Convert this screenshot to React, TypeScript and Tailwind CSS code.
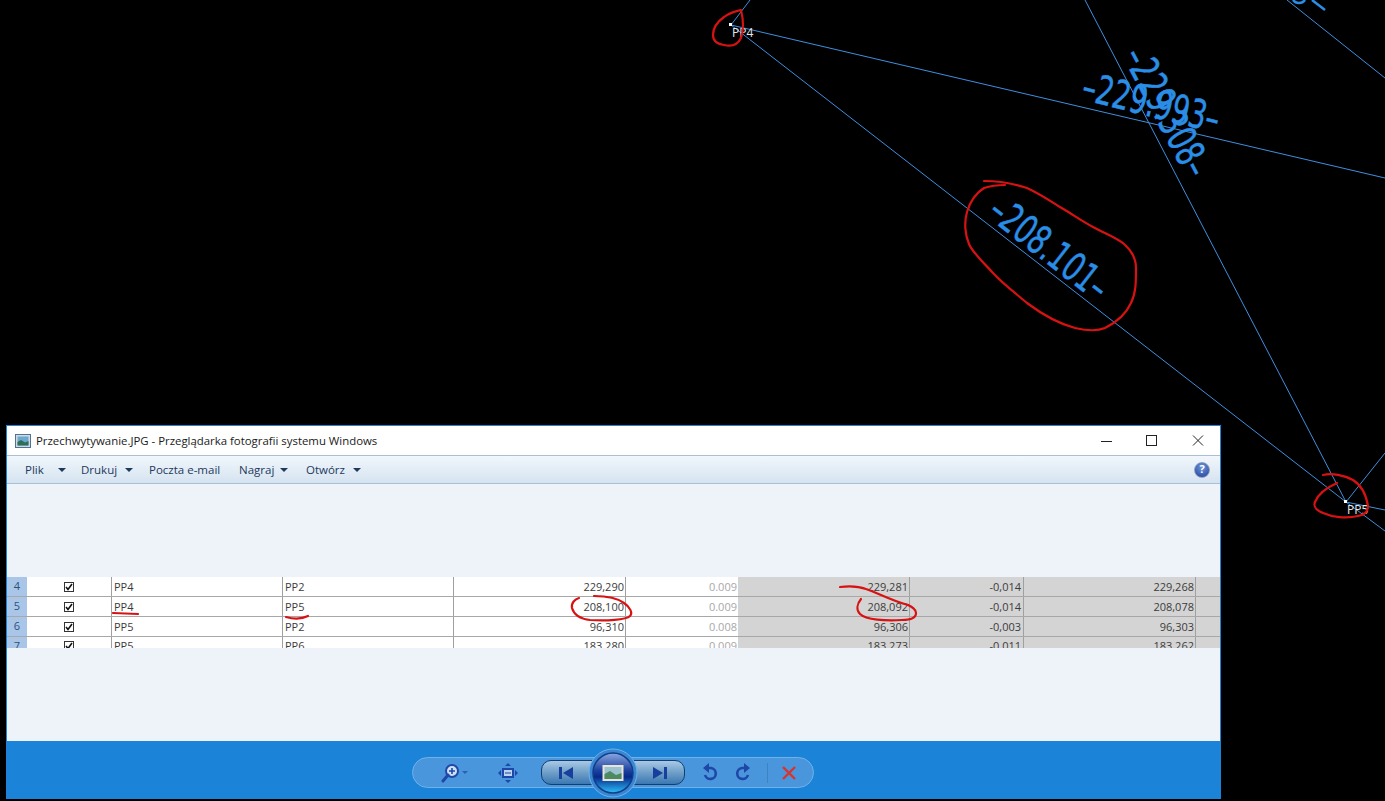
const font = "font-['Open_Sans','Noto_Sans',sans-serif]";

const rows = [
  { n: '4', a: 'PP4', b: 'PP2', c: '229,290', d: '0.009', e: '229,281', f: '-0,014', g: '229,268' },
  { n: '5', a: 'PP4', b: 'PP5', c: '208,100', d: '0.009', e: '208,092', f: '-0,014', g: '208,078' },
  { n: '6', a: 'PP5', b: 'PP2', c: '96,310', d: '0.008', e: '96,306', f: '-0,003', g: '96,303' },
  { n: '7', a: 'PP5', b: 'PP6', c: '183,280', d: '0.009', e: '183,273', f: '-0,011', g: '183,262' },
];

const menu = [
  { label: 'Plik', w: 'w-[56px]', arrow: 'mr-[15px]' },
  { label: 'Drukuj', w: 'w-[68px]', arrow: 'mr-[16px]' },
  { label: 'Poczta e-mail', w: 'w-[90px]', arrow: '' },
  { label: 'Nagraj', w: 'w-[67px]', arrow: 'mr-[18px]' },
  { label: 'Otwórz', w: 'w-[70px]', arrow: 'mr-[15px]' },
];

function CadDrawing() {
  const label = 'font-["DejaVu_Sans",sans-serif]';
  return (
    <svg className="absolute inset-0" width="1385" height="801">
      <g stroke="#3f8fe0" strokeWidth="1" fill="none">
        <line x1="731" y1="25" x2="1385" y2="178" />
        <line x1="731" y1="25" x2="1346" y2="502" />
        <line x1="731" y1="25" x2="750" y2="0" />
        <line x1="1085" y1="0" x2="1346" y2="502" />
        <line x1="1287" y1="0" x2="1385" y2="78" />
        <line x1="1346" y1="502" x2="1385" y2="453" />
        <line x1="1346" y1="502" x2="1385" y2="510" />
        <line x1="1346" y1="502" x2="1385" y2="531" />
      </g>
      <g fill="#2a8ee6" stroke="#2a8ee6" strokeWidth="0.5" className={label}>
        <text transform="translate(1041 259) rotate(38) scale(0.72 1.05)" fontSize="38" textAnchor="middle">–208.101–</text>
        <text transform="translate(1148 116) rotate(14) scale(0.72 1.05)" fontSize="38" textAnchor="middle">–229.993–</text>
        <text transform="translate(1155 118) rotate(62) scale(0.72 1.05)" fontSize="38" textAnchor="middle">–229.308–</text>
      </g>
      <g stroke="#2a8ee6" strokeWidth="2.5" fill="none">
        <path d="M1312 0 L1325 10" />
        <path d="M1293 0 C1296 4 1302 4 1305 0" />
      </g>
      <rect x="729" y="23" width="3" height="3" fill="#fff" />
      <rect x="1344" y="500" width="3" height="3" fill="#fff" />
      <g fill="#e8e8e8" fontSize="12" className={font}>
        <text x="732" y="37">PP4</text>
        <text x="1347" y="514">PP5</text>
      </g>
    </svg>
  );
}

function Annotations() {
  return (
    <svg className="absolute inset-0 pointer-events-none" width="1385" height="801">
      <g stroke="#d81212" fill="none" strokeWidth="2.2" strokeLinecap="round" strokeLinejoin="round">
        <path d="M741 10 C733 12 729 13 724 17 C717 22 713 28 713 35 C713 41 717 44 724 45 C732 47 738 44 741 38 C743 32 744 22 741 10" />
        <path d="M1323 475 C1332 473 1344 475 1353 480 C1361 485 1366 494 1368 506 C1368 512 1364 515 1358 516 C1346 519 1332 517 1323 513 C1316 510 1313 507 1315 502 C1318 494 1328 487 1337 483" />
        <path d="M984 181 C995 181 1012 183 1027 188 C1040 194 1052 202 1060 207 C1072 214 1082 221 1093 227 C1106 234 1117 238 1124 244 C1132 251 1136 258 1136 268 C1136 282 1136 293 1131 303 C1126 314 1117 322 1105 328 C1098 331 1088 331 1075 328 C1060 324 1043 315 1027 303 C1014 292 1002 283 993 273 C984 263 972 252 969 244 C965 235 964 222 967 212 C970 202 976 193 984 188 C990 186 998 185 1005 185" />
        <path d="M113 613 L138 614" />
        <path d="M286 617 C293 619 302 619 308 616" />
        <path d="M594 596 C604 596 616 597 624 603 C630 607 633 613 630 616 C626 620 606 621 590 620 C581 619 574 615 572 608 C571 603 575 599 579 598" />
        <path d="M840 587 C848 586 858 586 866 589 C878 593 892 601 908 605" />
        <path d="M861 599 C857 604 856 610 860 614 C866 620 886 621 902 620 C910 620 916 618 916 613 C916 609 912 607 908 605" />
      </g>
    </svg>
  );
}

function PictureIcon({ w, h }: { w: number; h: number }) {
  return (
    <svg width={w} height={h} viewBox="0 0 16 14">
      <rect x="0.5" y="0.5" width="15" height="13" fill="#cfdbe4" stroke="#4f7391" />
      <rect x="2.5" y="2.5" width="11" height="9" fill="#6fa8cf" />
      <path d="M2.5 8 L6 6 L10 8.5 L13.5 7 V11.5 H2.5Z" fill="#2f6f58" />
    </svg>
  );
}

function Orb() {
  return (
    <svg className="absolute left-[46px] top-[-13px]" width="50" height="50" viewBox="0 0 50 50">
      <defs>
        <linearGradient id="orbFill" x1="0" y1="0" x2="0" y2="1">
          <stop offset="0" stopColor="#8aa8e0" />
          <stop offset="0.45" stopColor="#1a3f9e" />
          <stop offset="0.6" stopColor="#08288a" />
          <stop offset="1" stopColor="#2cc0fa" />
        </linearGradient>
      </defs>
      <circle cx="25" cy="25" r="24" fill="#3a86d2" stroke="#6fb1e9" />
      <circle cx="25" cy="25" r="20" fill="url(#orbFill)" stroke="#0f3f88" strokeWidth="1.5" />
      <rect x="14.5" y="17" width="21" height="16" fill="#e8e4d8" />
      <rect x="16.5" y="19" width="17" height="12" fill="#9cc2cf" />
      <path d="M16.5 26 L22 23 L28 27 L33.5 25 V31 H16.5Z" fill="#4d8a62" />
    </svg>
  );
}

function Toolbar() {
  const ic = '#1f47a8';
  return (
    <div className="h-[58px] bg-[#1c84d8] flex justify-center pt-[16px] pr-[2px]">
      <div className="relative w-[402px] h-[31px] rounded-full border border-[#6fb1e9] bg-[#4a96dc] flex items-center">
        <svg className="ml-[27px]" width="28" height="20" viewBox="0 0 28 20">
          <circle cx="12" cy="8" r="6" fill="#cfe0f5" stroke={ic} strokeWidth="2" />
          <path d="M9 8h6M12 5v6" stroke={ic} strokeWidth="1.6" />
          <path d="M8 12 L3 18" stroke={ic} strokeWidth="3" strokeLinecap="round" />
          <path d="M22 8h6l-3 3z" fill="#2b5fb5" />
        </svg>
        <svg className="ml-[30px]" width="20" height="20" viewBox="0 0 20 20">
          <rect x="5" y="6" width="10" height="8" fill="#bcd5ee" stroke={ic} strokeWidth="2" />
          <path d="M7 10h6" stroke={ic} />
          <path d="M10 0l3 3H7zM10 20l3-3H7zM0 10l3-3v6zM20 10l-3-3v6z" fill={ic} />
        </svg>
        <div className="relative ml-[23px] w-[144px] h-[25px] rounded-[10px] border border-[#123f70] bg-gradient-to-b from-[#a9c9e6] via-[#6f9fc8] to-[#3a78b2] flex items-center justify-between px-[16px]">
          <svg width="16" height="14" viewBox="0 0 16 14"><path d="M1 1h3v12H1zM15 1v12L5 7z" fill="#173f9c" /></svg>
          <svg width="16" height="14" viewBox="0 0 16 14"><path d="M15 1h-3v12h3zM1 1v12l10-6z" fill="#173f9c" /></svg>
          <Orb />
        </div>
        <svg className="ml-[15px]" width="20" height="20" viewBox="0 0 20 20">
          <path d="M6 5 H11 A5.5 5.5 0 1 1 5 12" stroke={ic} strokeWidth="2.6" fill="none" />
          <path d="M9 0v10L3 5z" fill={ic} />
        </svg>
        <svg className="ml-[13px]" width="20" height="20" viewBox="0 0 20 20">
          <path d="M14 5 H9 A5.5 5.5 0 1 0 15 12" stroke={ic} strokeWidth="2.6" fill="none" />
          <path d="M11 0v10L17 5z" fill={ic} />
        </svg>
        <div className="ml-[14px] w-px h-[20px] bg-[#3d83c4]" />
        <svg className="ml-[13px]" width="16" height="16" viewBox="0 0 16 16">
          <path d="M2 2 L14 14 M14 2 L2 14" stroke="#d8342c" strokeWidth="2.4" />
        </svg>
      </div>
    </div>
  );
}

function Table() {
  const cell = 'border-r border-[#a0a0a0] flex items-center overflow-hidden pt-[1px]';
  return (
    <div className="h-[71px] overflow-hidden bg-white text-[11px] text-[#3c3c3c]">
      {rows.map(r => (
        <div key={r.n} className={`grid grid-cols-[20px_85px_171px_171px_172px_112px_172px_114px_172px_1fr] border-b border-[#a8a8a8] box-border ${r.n === '7' ? 'h-[18px]' : 'h-[20px]'}`}>
          <div className="bg-[#a9c6e8] text-[#2c5078] flex items-center justify-center">{r.n}</div>
          <div className="flex items-center justify-center border-r border-[#a0a0a0]">
            <div className="w-[10px] h-[10px] border border-[#333] bg-white flex items-center justify-center">
              <svg width="8" height="8" viewBox="0 0 8 8"><path d="M1 4 L3 6.5 L7 1" stroke="#111" strokeWidth="1.6" fill="none" /></svg>
            </div>
          </div>
          <div className={`${cell} pl-[2px]`}>{r.a}</div>
          <div className={`${cell} pl-[2px]`}>{r.b}</div>
          <div className={`${cell} justify-end pr-[1px]`}>{r.c}</div>
          <div className="flex items-center justify-end pr-[1px] pt-[1px] text-[#a8a8a8]">{r.d}</div>
          <div className={`${cell} justify-end pr-[1px] bg-[#d4d4d4]`}>{r.e}</div>
          <div className={`${cell} justify-end pr-[2px] bg-[#d4d4d4]`}>{r.f}</div>
          <div className={`${cell} justify-end pr-[1px] bg-[#d4d4d4]`}>{r.g}</div>
          <div className="bg-[#d4d4d4]" />
        </div>
      ))}
    </div>
  );
}

export default function App() {
  return (
    <div className={`relative w-[1385px] h-[801px] overflow-hidden bg-black ${font}`}>
      <CadDrawing />

      {/* photo viewer window */}
      <div className="absolute left-[6px] top-[425px] w-[1215px] h-[374px] border-x border-t border-[#1c84d8] flex flex-col">
        <div className="h-[29px] bg-white flex items-center pl-[8px] shrink-0">
          <PictureIcon w={16} h={14} />
          <span className="ml-[5px] text-[11.4px] text-[#1a1a1a]">Przechwytywanie.JPG - Przeglądarka fotografii systemu Windows</span>
          <div className="ml-auto flex items-center">
            <svg width="12" height="12" viewBox="0 0 12 12"><path d="M0 6.5h11" stroke="#222" /></svg>
            <svg className="ml-[32px]" width="12" height="12" viewBox="0 0 12 12"><rect x="1.5" y="0.5" width="10" height="10" fill="none" stroke="#222" /></svg>
            <svg className="ml-[35px] mr-[16px]" width="12" height="12" viewBox="0 0 12 12"><path d="M1 0.5 L11 10.5 M11 0.5 L1 10.5" stroke="#222" /></svg>
          </div>
        </div>
        <div className="h-[29px] shrink-0 border-y border-[#a9bfd3] bg-gradient-to-b from-[#f1f7fc] to-[#d5e3f0] flex items-center pl-[18px] text-[11.5px] text-[#1e395b]">
          {menu.map(m => (
            <div key={m.label} className={`${m.w} flex items-center shrink-0`}>
              <span>{m.label}</span>
              {m.arrow && <span className={`ml-auto ${m.arrow} w-0 h-0 border-x-[4px] border-x-transparent border-t-[4px] border-t-[#1e395b]`} />}
            </div>
          ))}
          <div className="ml-auto mr-[10px] w-[16px] h-[16px] rounded-full border border-[#8aa0bd] bg-[radial-gradient(circle_at_50%_30%,#6f96dc,#1f3f9a)] text-white text-[11px] font-bold flex items-center justify-center">?</div>
        </div>
        <div className="flex-1 bg-[#eef3fa] flex flex-col">
          <div className="h-[93px]" />
          <Table />
          <div className="flex-1" />
        </div>
        <Toolbar />
      </div>

      <Annotations />
    </div>
  );
}
